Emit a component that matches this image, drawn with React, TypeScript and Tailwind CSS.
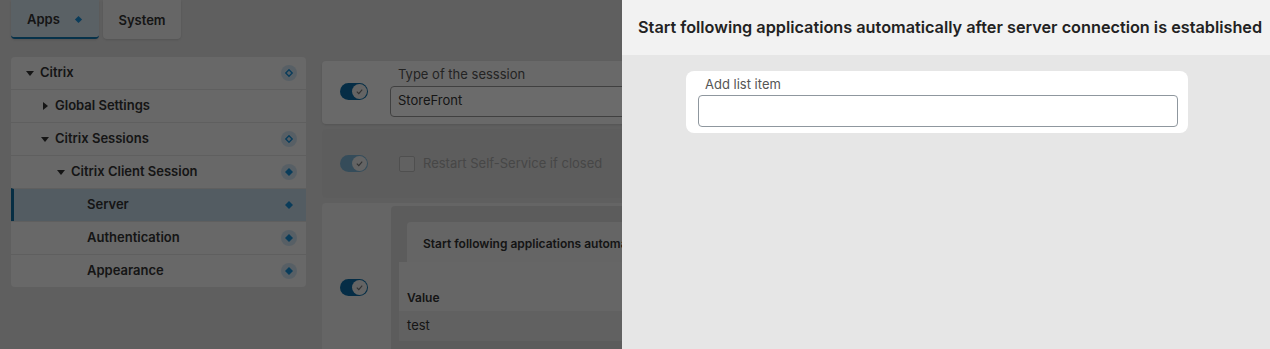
import { ChevronDown } from "lucide-react";

// Tree rows of the left panel
type TreeRow = {
  label: string;
  depth: number;
  caret?: "down" | "right";
  icon: "outline" | "filled" | "plain";
  selected?: boolean;
};

const treeRows: TreeRow[] = [
  { label: "Citrix", depth: 0, caret: "down", icon: "outline" },
  { label: "Global Settings", depth: 1, caret: "right", icon: "plain" },
  { label: "Citrix Sessions", depth: 1, caret: "down", icon: "outline" },
  { label: "Citrix Client Session", depth: 2, caret: "down", icon: "filled" },
  { label: "Server", depth: 3, icon: "plain", selected: true },
  { label: "Authentication", depth: 3, icon: "filled" },
  { label: "Appearance", depth: 3, icon: "filled" },
];

const indent: { [key: number]: string } = {
  0: "pl-[15px]",
  1: "pl-[30px]",
  2: "pl-[46px]",
  3: "pl-[76px]",
};

const Caret = ({ dir }: { dir: "down" | "right" }) => (
  <svg width="8" height="8" viewBox="0 0 8 8" className="mr-[6px] shrink-0">
    {dir === "down" ? (
      <path d="M0 2 L8 2 L4 7 Z" fill="#333" />
    ) : (
      <path d="M2 0 L7 4 L2 8 Z" fill="#333" />
    )}
  </svg>
);

const Diamond = ({ filled }: { filled: boolean }) => (
  <svg width="10" height="10" viewBox="0 0 10 10">
    {filled ? (
      <path d="M5 1 L9 5 L5 9 L1 5 Z" fill="#1a8fd6" />
    ) : (
      <path d="M5 1.8 L8.2 5 L5 8.2 L1.8 5 Z" fill="none" stroke="#1a8fd6" strokeWidth="1.4" />
    )}
  </svg>
);

const StatusIcon = ({ kind, row }: { kind: TreeRow["icon"]; row: TreeRow }) => {
  if (row.selected) {
    return (
      <span className="w-[16px] h-[16px] flex items-center justify-center">
        <Diamond filled />
      </span>
    );
  }
  if (kind === "plain") return null;
  return (
    <span className="w-[16px] h-[16px] rounded-full bg-[#cfe3f1] flex items-center justify-center">
      <Diamond filled={kind === "filled"} />
    </span>
  );
};

const Toggle = ({ dim }: { dim?: boolean }) => (
  <span
    className={`relative inline-flex w-[28px] h-[17px] rounded-full items-center ${
      dim ? "bg-[#7fb6d6]" : "bg-[#0c6da6]"
    }`}
  >
    <span className="absolute right-[1px] w-[15px] h-[15px] rounded-full bg-[#eeeeee] flex items-center justify-center">
      <svg width="9" height="9" viewBox="0 0 10 10">
        <path d="M2 5.2 L4.2 7.3 L8 2.8" fill="none" stroke="#777" strokeWidth="1.3" />
      </svg>
    </span>
  </span>
);

export default function App() {
  return (
    <div
      className="relative h-[349px] w-[1270px] overflow-hidden bg-[#e3e3e3] text-[#333]"
      style={{ fontFamily: "Inter, 'Liberation Sans', sans-serif" }}
    >
      <div className="flex gap-[16px] pl-[11px]">
        {/* Left column: tabs and tree */}
        <div className="w-[295px] shrink-0 flex flex-col">
          <div className="flex gap-[4px]">
            <div className="w-[88px] h-[39px] pt-[2px] pl-[16px] rounded-b-[4px] bg-[#d7e6f1] border-b-2 border-[#1077b0] flex items-center gap-[14px] text-[13px] font-semibold shadow-sm">
              Apps
              <svg width="9" height="9" viewBox="0 0 10 10">
                <path d="M5 1 L9 5 L5 9 L1 5 Z" fill="#1a8fd6" />
              </svg>
            </div>
            <div className="w-[78px] h-[39px] pt-[2px] rounded-b-[4px] bg-[#f4f4f4] flex items-center justify-center text-[13px] font-semibold shadow-sm">
              System
            </div>
          </div>

          <div className="mt-[18px] bg-[#f7f7f7] rounded-[4px] flex flex-col overflow-hidden">
            {treeRows.map((row, i) => (
              <div
                key={row.label}
                className={`flex items-center pr-[9px] text-[13px] font-semibold ${
                  indent[row.depth]
                } ${i > 0 ? "h-[33px] border-t border-[#e2e2e2]" : "h-[32px]"} ${
                  row.selected ? "bg-[#c6dcea] border-l-[3px] border-l-[#0f6ea3] !pl-[73px]" : ""
                }`}
              >
                {row.caret && <Caret dir={row.caret} />}
                <span className="flex-1">{row.label}</span>
                <StatusIcon kind={row.icon} row={row} />
              </div>
            ))}
          </div>
        </div>

        {/* Right column: settings cards */}
        <div className="flex-1 pt-[61px] flex flex-col gap-[5px] pr-[8px]">
          <div className="h-[63px] bg-[#fafafa] rounded-[4px] flex items-center pl-[18px] shadow-sm">
            <div className="pt-[2px]">
              <Toggle />
            </div>
            <div className="ml-[22px] flex-1 flex flex-col pt-[1px]">
              <span className="text-[13px] text-[#555] pl-[8px] leading-[22px] -mt-[7px]">
                Type of the sesssion
              </span>
              <div className="h-[31px] mt-[1px] border border-[#9a9a9a] rounded-[4px] bg-white flex items-center justify-between px-[7px] text-[13px]">
                StoreFront
                <ChevronDown size={14} />
              </div>
            </div>
          </div>

          <div className="h-[69px] bg-[#dedede] rounded-[4px] flex items-center pl-[18px]">
            <Toggle dim />
            <span className="ml-[31px] w-[16px] h-[16px] border border-[#bdbdbd] rounded-[2px] bg-[#e8e8e8]" />
            <span className="ml-[8px] text-[13px] text-[#a9a9a9]">Restart Self-Service if closed</span>
          </div>

          <div className="h-[160px] bg-[#f0f0f0] rounded-[4px] flex pl-[18px]">
            <div className="pt-[75px]">
              <Toggle />
            </div>
            <div className="ml-[23px] mt-[3px] flex-1 bg-[#dcdcdc] rounded-tl-[4px] pl-[16px] pt-[16px]">
              <div className="h-[40px] pt-[4px] bg-[#f0f0f0] rounded-t-[4px] flex items-center pl-[16px] text-[12px] font-semibold whitespace-nowrap overflow-hidden">
                Start following applications automatically after server connection is established
              </div>
              <div className="-ml-[8px] bg-[#f3f3f3] pt-[24px]">
                <div className="h-[24px] flex items-center pl-[8px] text-[12px] font-semibold">Value</div>
                <div className="h-[30px] flex items-center pl-[8px] text-[13px] bg-[#e8e8e8] mt-[1px]">test</div>
              </div>
            </div>
          </div>
        </div>
      </div>

      {/* Dimming overlay */}
      <div className="absolute inset-0 bg-black/[0.58]" />

      {/* Drawer */}
      <div className="absolute top-0 right-0 h-full w-[648px] bg-[#e6e6e6] flex flex-col">
        <div className="h-[55px] bg-[#f2f2f2] flex items-center pl-[16px] pb-[1px] text-[16.25px] font-semibold text-[#222] whitespace-nowrap">
          Start following applications automatically after server connection is established
        </div>
        <div className="ml-[64px] mt-[16px] w-[502px] bg-white rounded-[8px] pl-[12px] pr-[10px] pt-[3px] pb-[6px]">
          <div className="text-[13px] text-[#555] pl-[7px] leading-[20px]">Add list item</div>
          <div className="h-[32px] mt-[1px] border border-[#8f979e] rounded-[4px] bg-white" />
        </div>
      </div>
    </div>
  );
}
